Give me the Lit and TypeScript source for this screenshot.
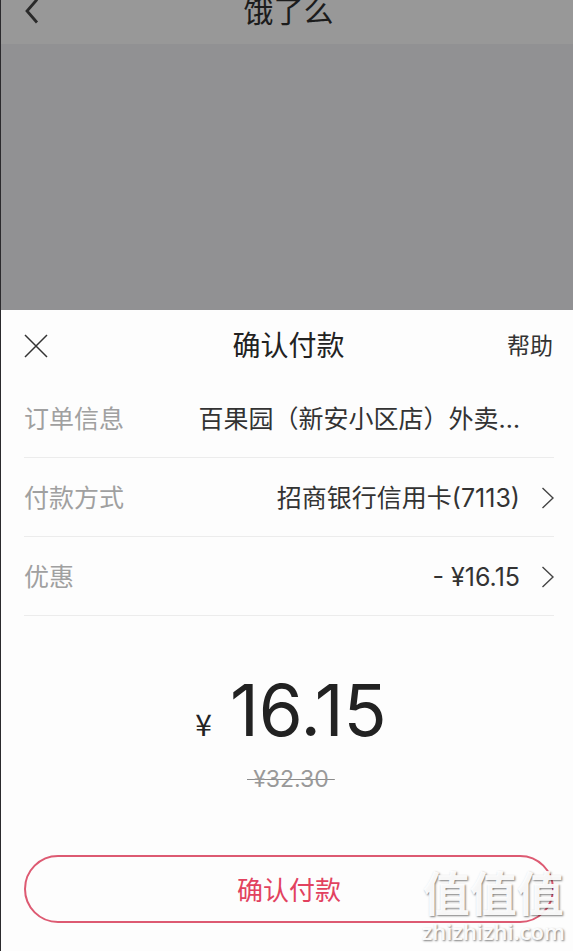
import { LitElement, html, css, svg, nothing } from "lit";
import { customElement, property } from "lit/decorators.js";

@customElement("detail-row")
class DetailRow extends LitElement {
  @property() label = "";
  @property() value = "";
  @property({ type: Boolean }) link = false;

  static styles = css`
    :host {
      display: block;
      border-bottom: 1px solid #ececec;
    }
    .row {
      display: flex;
      align-items: center;
      width: 100%;
      height: 78px;
      box-sizing: border-box;
      margin: 0;
      padding: 1px 0 0;
      border: 0;
      background: none;
      font: inherit;
      font-size: 25px;
      line-height: 36px;
      text-align: left;
      color: #333;
    }
    .label {
      color: #a0a0a0;
      flex: none;
    }
    .value {
      flex: 1;
      text-align: right;
      white-space: nowrap;
      overflow: hidden;
      text-overflow: ellipsis;
    }
    .side {
      flex: none;
      width: 34px;
      display: flex;
      justify-content: flex-end;
    }
  `;

  render() {
    const body = html`
      <span class="label">${this.label}</span>
      <span class="value">${this.value}</span>
      <span class="side">${this.link
        ? html`<svg width="13" height="24" viewBox="0 0 13 24" aria-hidden="true">
            ${svg`<path d="M1.500 2 12 12 1.500 22" fill="none" stroke="#444" stroke-width="1.400" />`}
          </svg>`
        : nothing}</span>`;
    return this.link
      ? html`<button class="row" type="button">${body}</button>`
      : html`<div class="row">${body}</div>`;
  }
}

@customElement("app-root")
class AppRoot extends LitElement {
  static styles = css`
    :host {
      display: flex;
      flex-direction: column;
      position: relative;
      min-height: 100vh;
      box-sizing: border-box;
      border-left: 1px solid #2b2a2d;
      background: #919193;
      color: #222;
      overflow: hidden;
      font-family: Inter, "Noto Sans CJK SC", sans-serif;
    }
    button {
      margin: 0;
      padding: 0;
      border: 0;
      background: none;
      font: inherit;
      color: inherit;
    }
    .bar,
    .head {
      display: grid;
      grid-template-columns: 1fr auto 1fr;
      align-items: center;
      padding: 0 20px 0 23px;
    }
    .bar {
      height: 44px;
      box-sizing: border-box;
      grid-template-rows: 22px;
      background: #989898;
    }
    .bar h1 {
      margin: 0;
      font-size: 30px;
      line-height: 22px;
      font-weight: 400;
      color: #1c1c1c;
    }
    .icon {
      display: flex;
      justify-self: start;
    }
    .sheet {
      flex: 1;
      display: flex;
      flex-direction: column;
      margin-top: 266px;
      background: #fdfdfd;
    }
    .head {
      height: 69px;
      box-sizing: border-box;
      padding-top: 2px;
    }
    .head h2 {
      margin: 0;
      font-size: 28px;
      line-height: 40px;
      font-weight: 400;
    }
    .help {
      justify-self: end;
      font-size: 23px;
      line-height: 40px;
      color: #333;
      text-decoration: none;
    }
    .rows {
      margin: 0 19px 0 23px;
    }
    .total {
      display: flex;
      flex-direction: column;
      align-items: center;
      padding-left: 8px;
    }
    .amount {
      display: flex;
      align-items: baseline;
      gap: 18px;
      margin-top: 54px;
      line-height: 80px;
      font-size: 71px;
    }
    .sign {
      font-family: "Noto Sans CJK SC", sans-serif;
      font-size: 30px;
    }
    .was {
      margin-top: 2px;
      padding: 0 6px;
      font-size: 23px;
      line-height: 28px;
      color: #999;
      text-decoration: none;
      background: linear-gradient(#8c8c8c, #8c8c8c) center / 100% 1px no-repeat;
    }
    .pay {
      height: 68px;
      margin: 62px 19px 28px 23px;
      padding-bottom: 2px;
      border: 2px solid #dd5a72;
      border-radius: 34px;
      font-size: 26px;
      color: #e2425f;
    }
    .mark {
      position: absolute;
      right: 8px;
      bottom: 8px;
      display: flex;
      flex-direction: column;
      align-items: center;
      color: rgba(255, 255, 255, 0.95);
      text-shadow: 1px 1px 2px rgba(0, 0, 0, 0.5);
      pointer-events: none;
    }
    .mark-name {
      font-family: "Noto Sans CJK SC", sans-serif;
      font-size: 47px;
      line-height: 56px;
      font-weight: 700;
    }
    .mark-site {
      font-family: "Open Sans", sans-serif;
      font-size: 22px;
      line-height: 24px;
      font-weight: 600;
    }
  `;

  render() {
    return html`
      <header class="bar">
        <button class="icon" type="button" aria-label="返回">
          <svg width="16" height="28" viewBox="0 0 16 28" aria-hidden="true">
            <path d="M13 2.500 3 14 13 25.500" fill="none" stroke="#2a2a2a" stroke-width="2.800" />
          </svg>
        </button>
        <h1>饿了么</h1>
      </header>
      <main class="sheet">
        <div class="head">
          <button class="icon" type="button" aria-label="关闭">
            <svg width="24" height="24" viewBox="0 0 24 24" aria-hidden="true">
              <path d="M1 1 23 23M23 1 1 23" fill="none" stroke="#333" stroke-width="1.500" />
            </svg>
          </button>
          <h2>确认付款</h2>
          <a class="help" href="#help">帮助</a>
        </div>
        <div class="rows">
          <detail-row label="订单信息" value="百果园（新安小区店）外卖…"></detail-row>
          <detail-row label="付款方式" value="招商银行信用卡(7113)" link></detail-row>
          <detail-row label="优惠" value="- ¥16.15" link></detail-row>
        </div>
        <div class="total">
          <div class="amount"><span class="sign">¥</span><span>16.15</span></div>
          <s class="was">¥32.30</s>
        </div>
        <button class="pay" type="button">确认付款</button>
      </main>
      <div class="mark">
        <span class="mark-name">值值值</span>
        <span class="mark-site">zhizhizhi.com</span>
      </div>
    `;
  }
}
